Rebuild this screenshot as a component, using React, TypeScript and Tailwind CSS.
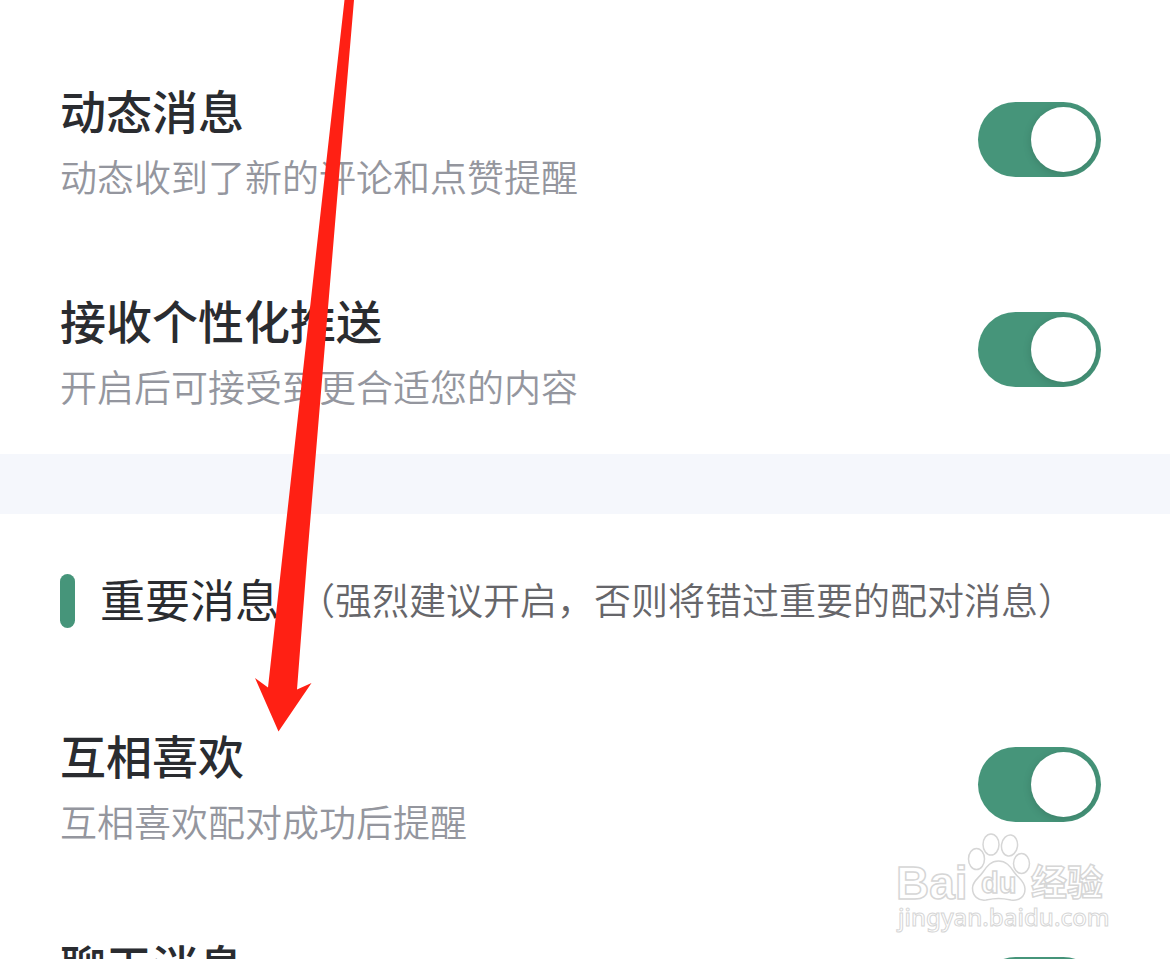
import React, { useState } from 'react';

interface SettingRowProps {
    id: string;
    title: string;
    description: string;
}

const SettingRow = ({ id, title, description }: SettingRowProps) => {
    const [enabled, setEnabled] = useState(true);

    return (
        <div className="flex items-center justify-between h-[210px]">
            <label htmlFor={id} className="flex flex-col gap-[10px]">
                <span className="text-[46px] leading-[64px] font-medium text-[#2a2c30]">{title}</span>
                <span className="text-[37px] leading-[50px] font-[350] text-[#94969e]">{description}</span>
            </label>
            <input
                id={id}
                type="checkbox"
                role="switch"
                checked={enabled}
                onChange={() => setEnabled(!enabled)}
                className="appearance-none shrink-0 flex items-center w-[123px] h-[75px] px-[5px] rounded-full bg-gray-300 checked:bg-[#46957a] checked:justify-end before:content-[''] before:w-[65px] before:h-[65px] before:rounded-full before:bg-white before:shadow-[0_2px_8px_rgba(0,0,0,0.15)] overflow-hidden"
            />
        </div>
    );
};

const Arrow = () => (
    <svg className="absolute left-0 top-0 pointer-events-none" width="400" height="740" viewBox="0 0 400 740" aria-hidden="true">
        <path d="M344.500 0 354 0 337 200 307 560 297 689.500 311.500 683 278.500 731.500 255 678 268 687.500 282 560 322 200Z" fill="#ff2014" />
    </svg>
);

const Watermark = () => (
    <svg
        className="absolute left-[890px] top-[828px] pointer-events-none"
        width="230"
        height="110"
        viewBox="890 828 230 110"
        fill="#fff"
        stroke="#d6d6d6"
        strokeWidth="1.500"
        aria-hidden="true"
    >
        <text x="896" y="899" fontFamily="'Liberation Sans', sans-serif" fontSize="46" fontWeight="700">Bai</text>
        <ellipse cx="976.500" cy="859" rx="8" ry="10.500" />
        <ellipse cx="991" cy="844.500" rx="8" ry="10.500" />
        <ellipse cx="1009.500" cy="845.500" rx="8" ry="10.500" transform="rotate(8 1009.500 845.500)" />
        <ellipse cx="1021.500" cy="863.500" rx="8" ry="10" />
        <path d="M998.500 861C1006 861 1010 866 1014 872C1018 878 1025 881 1025 889C1025 897 1019 901 1011 900C1006 899 1003 898.500 998.500 898.500C994 898.500 991 899 986 900C978 901 972.500 896 972.500 888C972.500 881 979 878 983 872C987 866 991 861 998.500 861Z" />
        <text x="981" y="893" fontFamily="'Liberation Sans', sans-serif" fontSize="29" fontWeight="700">du</text>
        <text x="1031" y="896" fontFamily="'Noto Sans CJK SC', sans-serif" fontSize="36" fontWeight="700">经验</text>
        <text x="898" y="926" fontFamily="'Noto Sans', sans-serif" fontSize="24" fontWeight="500" strokeWidth="1">jingyan.baidu.com</text>
    </svg>
);

export default function App() {
    return (
        <main className="relative h-screen overflow-hidden bg-white font-['Noto_Sans_CJK_SC',sans-serif]">
            <section className="pt-[34px] pl-[60px] pr-[69px]">
                <SettingRow id="moments" title="动态消息" description="动态收到了新的评论和点赞提醒" />
                <SettingRow id="push" title="接收个性化推送" description="开启后可接受到更合适您的内容" />
            </section>

            <div className="h-[60px] bg-[#f5f7fc]"></div>

            <section className="pl-[60px] pr-[69px]">
                <header className="flex items-center h-[165px] pt-2">
                    <div className="w-[15px] h-[54px] rounded-full bg-[#46957a]"></div>
                    <div className="flex items-center ml-[25px] pb-1 whitespace-nowrap">
                        <h2 className="text-[45px] leading-[64px] font-normal text-[#2a2c30]">重要消息</h2>
                        <p className="ml-[18px] text-[37px] leading-[50px] font-[350] text-[#66666a]">（强烈建议开启，否则将错过重要的配对消息）</p>
                    </div>
                </header>
                <SettingRow id="match" title="互相喜欢" description="互相喜欢配对成功后提醒" />
                <SettingRow id="chat" title="聊天消息" description="收到新的聊天消息提醒" />
            </section>

            <Arrow />
            <Watermark />
        </main>
    );
}
